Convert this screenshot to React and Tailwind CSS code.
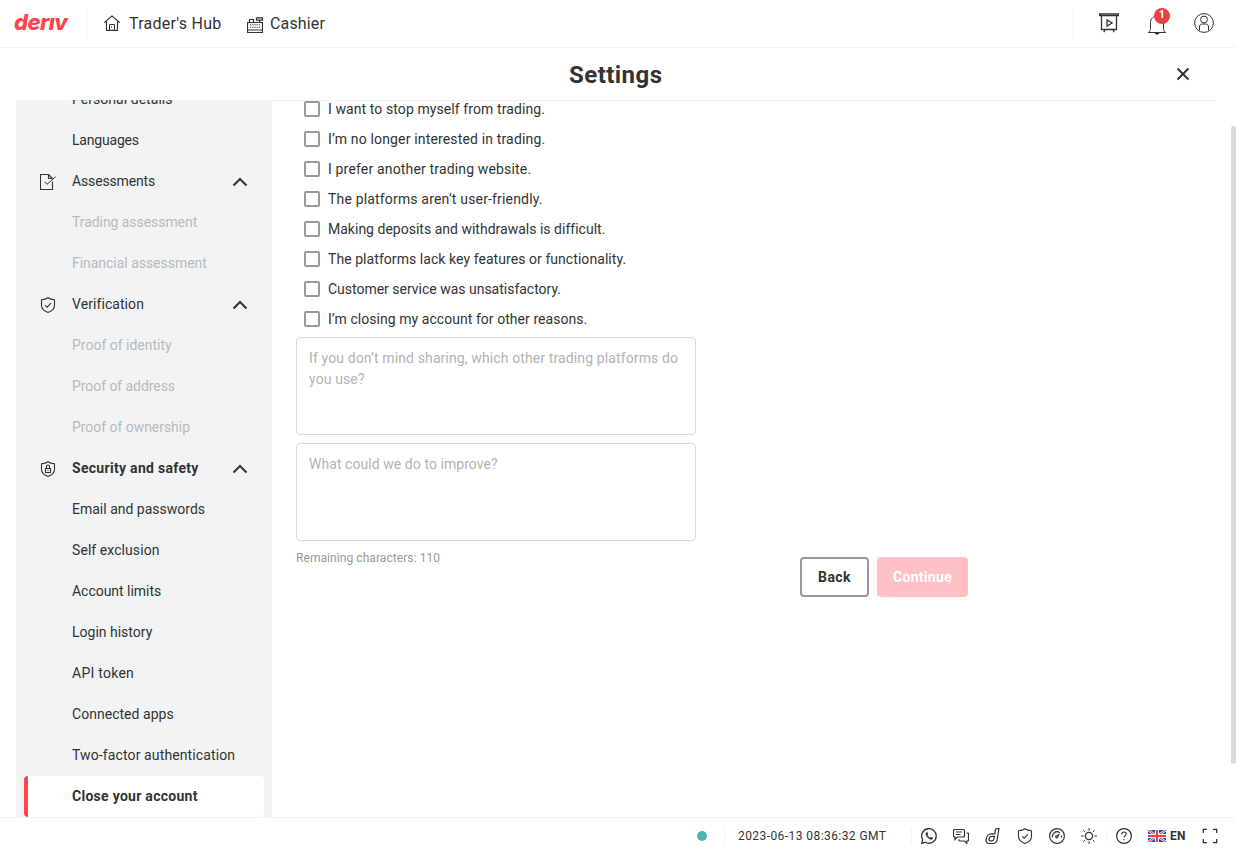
import React from "react";

const Svg = ({ size = 16, className = "", sw = 1, children }) => (
  <svg
    width={size}
    height={size}
    viewBox={`0 0 ${size} ${size}`}
    fill="none"
    stroke="#333"
    strokeWidth={sw}
    className={`shrink-0 ${className}`}
  >
    {children}
  </svg>
);

const HomeIcon = () => (
  <Svg>
    <path d="M.6 7.500 8 .8l7.400 6.700M2.500 6.500v8.900h11V6.500" strokeLinejoin="round" strokeLinecap="round" strokeWidth="1.100" />
    <path d="M5.500 15.400V9.500h5v5.900M7.500 11.500v1" />
  </Svg>
);

const CashierIcon = () => (
  <Svg>
    <path d="M.5 5.500h15v10H.5zM.5 13h15" strokeWidth="1.200" />
    <path d="M2.500 5V2.500h4V5M9.500.8h6v2.400h-6zM12.500 3.200V5.500" strokeWidth="1.200" />
    <path d="M3 7.800h10.500M3 10.300h10.500" strokeDasharray="1.200 1" />
  </Svg>
);

const PresentIcon = () => (
  <Svg size={20}>
    <path d="M.7 1h18.600v1.700H.7zM2.500 3v13.500h15V3" strokeWidth="1.300" />
    <path d="M8 7v6l5-3zM6 16.500l-1.200 2.700M14 16.500l1.200 2.700" strokeWidth="1.300" />
  </Svg>
);

const BellIcon = () => (
  <Svg size={20}>
    <path d="M1.200 17.500h17.600c-1.800-1.200-2.300-2.200-2.300-4V7.500C16.500 3.500 13.500 1 10 1S3.500 3.500 3.500 7.500v6c0 1.800-.5 2.800-2.300 4z" />
    <path d="M8 18c.3 1.600 3.700 1.600 4 0z" fill="#333" />
  </Svg>
);

const UserIcon = () => (
  <Svg size={20}>
    <circle cx="10" cy="10" r="9.400" />
    <circle cx="10" cy="6.500" r="3.400" />
    <path d="M5.500 17.500V14c0-2 1.200-3 3-3h3c1.800 0 3 1 3 3v3.500" />
  </Svg>
);

const shieldPath = "M8 .7C6.300 2 4 2.600 1.500 2.700v5.500c0 3.600 2.600 5.800 6.500 7.200 3.900-1.400 6.500-3.600 6.500-7.200V2.700C12 2.600 9.700 2 8 .7z";

const ShieldCheckIcon = () => (
  <Svg>
    <path d={shieldPath} strokeLinejoin="round" strokeWidth="1.100" />
    <path d="M5.200 8.300 7.200 10.200 10.900 6.200" strokeWidth="1.100" />
  </Svg>
);

const ShieldLockIcon = () => (
  <Svg>
    <path d={shieldPath} strokeLinejoin="round" strokeWidth="1.100" />
    <path d="M5.500 7.500h5V11.500h-5zM6.500 7.500V5.500a1.500 1.500 0 0 1 3 0v2M7.500 9.500h1" strokeWidth="1.100" />
  </Svg>
);

const AssessmentIcon = () => (
  <Svg>
    <path d="M12.500 7.500v8H.5V.5h8l4 4M8.500.5v4h4" strokeWidth="1.100" />
    <path d="M4.500 7.700 7 10.300l8.700-7.600" />
  </Svg>
);

const ChevronUp = () => (
  <Svg sw={2}>
    <path d="M1.500 11.500 8 5l6.500 6.500" />
  </Svg>
);

const CloseIcon = () => (
  <Svg sw={2}>
    <path d="M2.500 2.500l11 11M13.500 2.500l-11 11" />
  </Svg>
);

const WhatsAppIcon = () => (
  <Svg>
    <path d="M.8 15.200 1.700 11.700a7.300 7.300 0 1 1 2.700 2.600z" strokeWidth="1.300" />
    <path d="M5.500 4.200c-1.300.8-1.100 2.700.6 4.700 1.900 2.300 4.200 3.300 5.300 2.400.9-.8.8-1.300.3-1.600l-1.300-.7c-.6-.3-.9.7-1.300.6C8 9.200 6.900 8 6.600 7.200c-.1-.4.7-.6.6-1.100l-.6-1.500c-.2-.4-.6-.7-1.100-.4z" fill="#333" stroke="none" />
  </Svg>
);

const ChatIcon = () => (
  <Svg>
    <path d="M1.500 1.500h9a1 1 0 0 1 1 1V8a1 1 0 0 1-1 1H4.500L2 11.500V9h-.5a1 1 0 0 1-1-1V2.500a1 1 0 0 1 1-1zM3 4h6M3 6.500h4.500" strokeWidth="1.200" />
    <path d="M13.500 5h1a1 1 0 0 1 1 1v6a1 1 0 0 1-1 1h-.7v2.300L11.500 13H7a1 1 0 0 1-1-1v-.8" strokeWidth="1.200" />
  </Svg>
);

const DerivIcon = () => (
  <Svg>
    <path
      d="M10.600 1 13.900.5 12.300 11c-.4 2.700-1.800 4.500-4.300 4.500H4.400c-2.400 0-3.700-1.700-3.300-4.200C1.500 8.300 3.600 5.800 6.300 5.800h3.500z"
      strokeWidth="1.200"
    />
    <path d="M9.400 8.400H7C5.400 8.400 4.200 9.600 4 11.200c-.1 1 .5 1.600 1.400 1.600h1.500c1.100 0 1.800-.6 2-1.700z" strokeWidth="1.200" />
  </Svg>
);

const GaugeIcon = () => (
  <Svg>
    <circle cx="8" cy="8" r="7.400" strokeWidth="1.200" />
    <path d="M3.500 9.500V8a4.500 4.500 0 0 1 7.400-3.200M12.500 7.500v2" strokeWidth="1.200" />
    <circle cx="7.800" cy="8.800" r="1.100" strokeWidth="1.200" />
    <path d="M8.600 8 10.500 6" strokeWidth="1.200" />
  </Svg>
);

const SunIcon = () => (
  <Svg>
    <circle cx="8" cy="8" r="3.600" strokeWidth="1.300" />
    <path d="M8 0v2.700M8 13.300V16M0 8h2.700M13.300 8H16M2.300 2.300l1.900 1.900M11.800 11.800l1.900 1.900M2.300 13.700l1.900-1.900M11.800 4.200l1.900-1.900" />
  </Svg>
);

const HelpIcon = () => (
  <Svg>
    <circle cx="8" cy="8" r="7.400" strokeWidth="1.200" />
    <path d="M5.800 6.300C5.800 4.900 6.700 4 8 4s2.200.9 2.200 2.100C10.200 7.500 8 7.800 8 9.600M8 11v1.300" strokeWidth="1.200" />
  </Svg>
);

const FullscreenIcon = () => (
  <Svg sw={1.3}>
    <path d="M1.300 5V1.300H5M11 1.300h3.700V5M14.700 11v3.700H11M5 14.700H1.300V11" />
  </Svg>
);

const Flag = () => (
  <svg width="18" height="12" viewBox="0 0 18 12" className="shrink-0">
    <path fill="#0052b4" d="M0 0h18v12H0z" />
    <path stroke="#f0f0f0" strokeWidth="2.400" d="M0 0l18 12M18 0 0 12" />
    <path stroke="#e0303f" strokeWidth="1" d="M0 0l18 12M18 0 0 12" />
    <path stroke="#f0f0f0" strokeWidth="4" d="M9 0v12M0 6h18" />
    <path stroke="#f0404a" strokeWidth="2" d="M9 0v12M0 6h18" />
  </svg>
);

const nav = [
  { label: "Personal details", ls: "tracking-[0.04px]" },
  { label: "Languages", ls: "tracking-[-0.2px]" },
  { label: "Assessments", icon: AssessmentIcon, ls: "tracking-[-0.15px]" },
  { label: "Trading assessment", off: true, ls: "tracking-[-0.06px]" },
  { label: "Financial assessment", off: true, ls: "tracking-[-0.03px]" },
  { label: "Verification", icon: ShieldCheckIcon, ls: "tracking-[0.07px]" },
  { label: "Proof of identity", off: true, ls: "tracking-[0px]" },
  { label: "Proof of address", off: true, ls: "tracking-[-0.06px]" },
  { label: "Proof of ownership", off: true, ls: "tracking-[-0.04px]" },
  { label: "Security and safety", icon: ShieldLockIcon, bold: true, ls: "tracking-[0.3px]" },
  { label: "Email and passwords", ls: "tracking-[0px]" },
  { label: "Self exclusion", ls: "tracking-[0.07px]" },
  { label: "Account limits", ls: "tracking-[-0.03px]" },
  { label: "Login history", ls: "tracking-[0px]" },
  { label: "API token", ls: "tracking-[0.25px]" },
  { label: "Connected apps", ls: "tracking-[0.03px]" },
  { label: "Two-factor authentication", ls: "tracking-[0.12px]" },
  { label: "Close your account", bold: true, active: true, ls: "tracking-[0.28px]" },
];

function NavItem({ label, icon: Icon, off, bold, active, ls }) {
  return (
    <div
      className={`flex h-[41px] w-[240px] shrink-0 items-center rounded pr-4 pb-0.5 ${
        active ? "border-l-4 border-[#ff444f] bg-white pl-3" : "pl-4"
      }`}
    >
      <span className="flex w-8 shrink-0 pt-0.5">{Icon && <Icon />}</span>
      <span
        className={`grow whitespace-nowrap text-sm ${ls} ${off ? "text-[#b8babc]" : "text-[#333]"} ${
          bold ? "font-bold" : ""
        }`}
      >
        {label}
      </span>
      {Icon && (
        <span className="pt-0.5">
          <ChevronUp />
        </span>
      )}
    </div>
  );
}

const reasons = [
  ["I want to stop myself from trading.", "tracking-[0.09px]"],
  ["I’m no longer interested in trading.", "tracking-[0.155px]"],
  ["I prefer another trading website.", "tracking-[0.16px]"],
  ["The platforms aren’t user-friendly.", "tracking-[0.17px]"],
  ["Making deposits and withdrawals is difficult.", "tracking-[0.01px]"],
  ["The platforms lack key features or functionality.", "tracking-[0.06px]"],
  ["Customer service was unsatisfactory.", "tracking-[-0.01px]"],
  ["I’m closing my account for other reasons.", "tracking-[0.05px]"],
];

const box =
  "block h-[98px] w-[400px] resize-none rounded border border-[#d6dadb] px-3 py-2.5 text-sm leading-[21px] text-[#333] outline-none placeholder:text-[#b3b3b3]";

export default function App() {
  return (
    <div className="flex h-[853px] w-[1236px] flex-col overflow-hidden bg-white font-[Roboto,'Liberation_Sans',sans-serif] text-[#333]">
      <header className="flex h-12 shrink-0 items-center border-b border-[#f2f3f4]">
        <div className="w-[86px] pb-[3px] pl-[14px] font-[Inter,sans-serif] text-[22px] leading-none font-extrabold tracking-[-0.6px] text-[#ff444f] italic">
          derıv
        </div>
        <div className="h-[30px] w-px bg-[#f2f3f4]" />
        <div className="flex items-center pl-[17px]">
          <span className="pb-px">
            <HomeIcon />
          </span>
          <span className="ml-[9px] w-[118px] pt-px text-base tracking-[0.25px] whitespace-nowrap">Trader's Hub</span>
          <span className="pt-[3px]">
            <CashierIcon />
          </span>
          <span className="ml-[7px] pt-px text-base tracking-[0.15px]">Cashier</span>
        </div>
        <div className="ml-auto flex items-center pr-[22px]">
          <div className="h-[30px] w-px bg-[#f2f3f4]" />
          <div className="ml-[25px] pb-0.5">
            <PresentIcon />
          </div>
          <div className="relative mt-0.5 ml-7">
            <BellIcon />
            <span className="absolute -top-[7px] left-[7px] flex size-4 items-center justify-center rounded-full bg-[#ec3f3f] text-[11px] font-bold text-white">
              1
            </span>
          </div>
          <div className="ml-[27px] pb-0.5">
            <UserIcon />
          </div>
        </div>
      </header>

      <div className="mr-5 ml-4 flex h-[52px] shrink-0 items-center pl-[553px]">
        <h1 className="grow pt-0.5 text-2xl font-bold tracking-[0.45px]">Settings</h1>
        <div className="mr-[25px]">
          <CloseIcon />
        </div>
      </div>

      <div className="flex min-h-0 grow">
        <nav className="ml-4 flex w-64 shrink-0 flex-col justify-end overflow-hidden bg-[#f2f3f4] px-2">
          {nav.map((n) => (
            <NavItem key={n.label} {...n} />
          ))}
        </nav>
        <main className="flex w-[944px] shrink-0 flex-col overflow-hidden border-t border-[#f2f3f4] pl-6">
          <div className="-mt-[7px] mb-[3px] pl-2">
            {reasons.map(([text, ls]) => (
              <label key={text} className="flex h-[30px] items-center gap-2">
                <span className="size-4 rounded-[2px] border-2 border-[#999]" />
                <span className={`text-sm whitespace-nowrap ${ls}`}>{text}</span>
              </label>
            ))}
          </div>
          <div className="flex flex-col gap-2">
            <textarea
              className={`${box} tracking-[0.12px]`}
              placeholder="If you don’t mind sharing, which other trading platforms do you use?"
            />
            <textarea className={`${box} tracking-[0.06px]`} placeholder="What could we do to improve?" />
          </div>
          <div className="flex w-[672px] justify-between">
            <span className="mt-2 text-xs leading-[18px] tracking-[0.07px] text-[#999]">Remaining characters: 110</span>
            <div className="mt-4 flex gap-2">
              <button className="h-10 w-[69px] rounded border-2 border-[#999] text-sm font-bold tracking-[0.4px]">Back</button>
              <button className="h-10 w-[91px] rounded bg-[#ffc1c5] text-sm font-bold tracking-[0.3px] text-white">Continue</button>
            </div>
          </div>
        </main>
        <div className="mt-[26px] ml-auto h-[638px] w-[5px] rounded-full bg-[#d6dadb]" />
      </div>

      <footer className="flex h-9 shrink-0 items-center border-t border-[#f2f3f4] pr-[18px] pl-[697px]">
        <span className="size-2.5 rounded-full bg-[#4bb4b3]" />
        <span className="ml-[17px] h-4 w-px bg-[#f2f3f4]" />
        <span className="ml-[13px] w-[173px] text-xs tracking-[0.43px] whitespace-nowrap">2023-06-13 08:36:32 GMT</span>
        <span className="h-4 w-px bg-[#f2f3f4]" />
        <div className="ml-[9px] flex gap-4">
          <WhatsAppIcon />
          <ChatIcon />
          <DerivIcon />
          <ShieldCheckIcon />
          <GaugeIcon />
          <SunIcon />
        </div>
        <span className="ml-[9px] h-4 w-px bg-[#f2f3f4]" />
        <span className="ml-[9px]">
          <HelpIcon />
        </span>
        <span className="ml-4">
          <Flag />
        </span>
        <span className="ml-1 text-xs font-bold tracking-[0.3px]">EN</span>
        <span className="ml-auto">
          <FullscreenIcon />
        </span>
      </footer>
    </div>
  );
}
